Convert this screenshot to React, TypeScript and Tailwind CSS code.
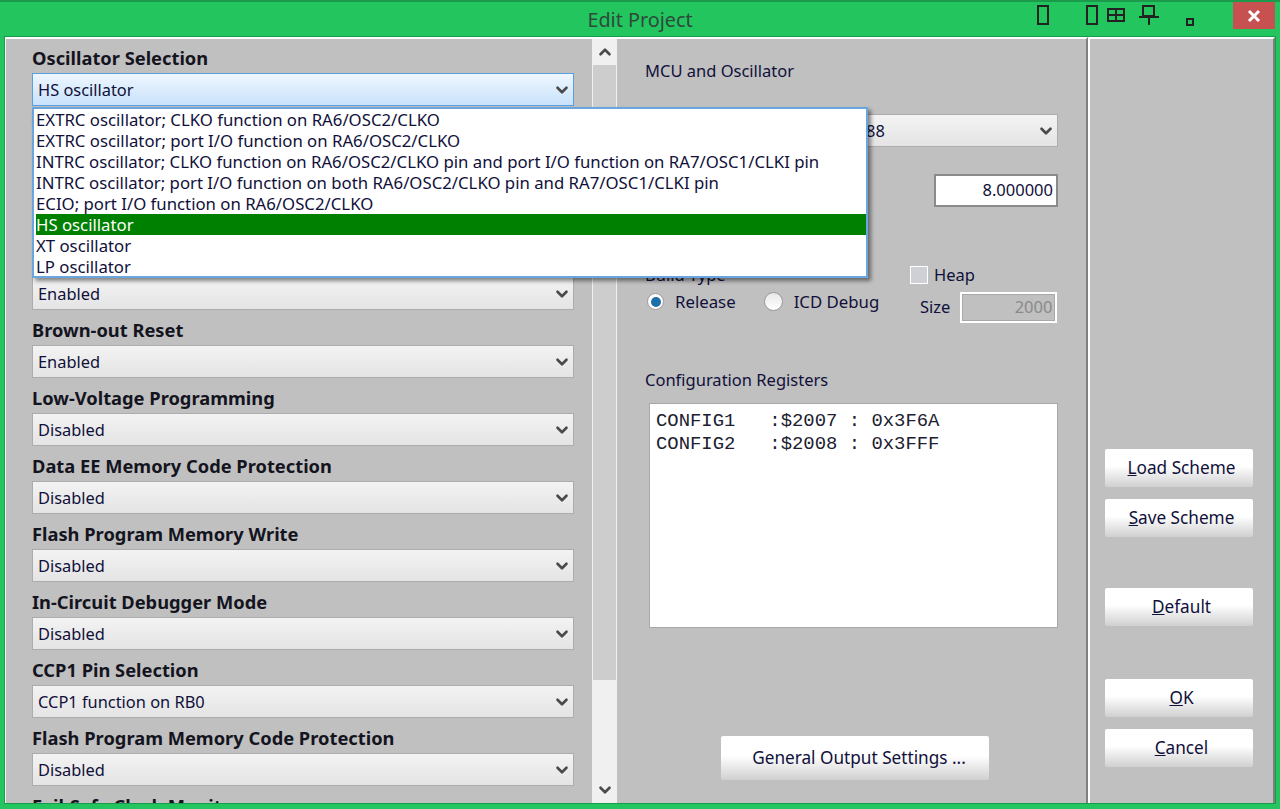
import React from "react";
import { ChevronDown, ChevronUp } from "lucide-react";

const font = "font-['Noto_Sans','Open_Sans',sans-serif]";

const rows: [string, string][] = [
  ["Oscillator Selection", "HS oscillator"],
  ["Watchdog Timer", "Disabled"],
  ["Power-up Timer", "Enabled"],
  ["RA5/MCLR/VPP Pin Function", "Enabled"],
  ["Brown-out Reset", "Enabled"],
  ["Low-Voltage Programming", "Disabled"],
  ["Data EE Memory Code Protection", "Disabled"],
  ["Flash Program Memory Write", "Disabled"],
  ["In-Circuit Debugger Mode", "Disabled"],
  ["CCP1 Pin Selection", "CCP1 function on RB0"],
  ["Flash Program Memory Code Protection", "Disabled"],
  ["Fail-Safe Clock Monitor", "Enabled"],
];

const options = [
  "EXTRC oscillator; CLKO function on RA6/OSC2/CLKO",
  "EXTRC oscillator; port I/O function on RA6/OSC2/CLKO",
  "INTRC oscillator; CLKO function on RA6/OSC2/CLKO pin and port I/O function on RA7/OSC1/CLKI pin",
  "INTRC oscillator; port I/O function on both RA6/OSC2/CLKO pin and RA7/OSC1/CLKI pin",
  "ECIO; port I/O function on RA6/OSC2/CLKO",
  "HS oscillator",
  "XT oscillator",
  "LP oscillator",
];

function Combo({ value, focused, className = "" }: { value: string; focused?: boolean; className?: string }) {
  return (
    <div
      className={
        "flex h-[33px] items-center justify-between border pl-[5px] pr-[2px] text-[16.4px] text-[#10103a] " +
        (focused
          ? "border-[#5a9fe0] bg-gradient-to-b from-[#eef6fe] to-[#c9e2fb] "
          : "border-[#acacac] bg-gradient-to-b from-[#f3f3f3] to-[#e4e4e4] ") +
        className
      }
    >
      <span className="whitespace-nowrap pt-[2px]">{value}</span>
      <ChevronDown size={18} strokeWidth={3.5} color="#4a4a4a" />
    </div>
  );
}

function Btn({ children, className = "" }: { children: React.ReactNode; className?: string }) {
  return (
    <div
      className={
        "flex items-center justify-center rounded-[2px] bg-gradient-to-b from-white from-45% to-[#d0d0d0] text-[17.2px] text-[#10103a] " +
        className
      }
    >
      {children}
    </div>
  );
}

export default function App() {
  return (
    <div className={"flex h-[809px] w-[1280px] flex-col overflow-hidden border-t-2 border-[#1b9a4c] bg-[#22c55e] px-[5px] pb-[6px] " + font}>
      <div className="relative flex h-[35px] shrink-0 items-center justify-center pt-[1px] text-[19.8px] text-[#2f4a3c]">
        Edit Project
        <div className="absolute right-[-5px] top-[-2px] h-[37px] w-[1280px]">
          <svg className="absolute left-0 top-0" width="1280" height="37" fill="none" stroke="#222" strokeWidth="2">
            <rect x="1038" y="6" width="10" height="18" />
            <rect x="1087" y="6" width="10" height="18" />
            <path d="M1108 9h16v12h-16zM1116 9v12M1108 15h16" />
            <path d="M1143 6h11v10h-11zM1139 17h20" />
            <path d="M1149 17v8" />
            <rect x="1187" y="19" width="6" height="6" />
          </svg>
          <div className="absolute left-[1233px] top-[2px] flex h-[27px] w-[42px] items-center justify-center bg-[#c75050]">
            <svg width="14" height="14" fill="none" stroke="#fff" strokeWidth="3">
              <path d="M2 2l10 10M12 2L2 12" />
            </svg>
          </div>
        </div>
      </div>

      <div className="relative flex min-h-0 flex-1 bg-[#c0c0c0] ring-1 ring-[#1b9a4c]">
        {/* left page */}
        <div className="flex w-[1083px] shrink-0 border-l border-r-2 border-t-2 border-white border-r-[#808080]">
          <div className="w-[586px] shrink-0 overflow-hidden pl-[26px] pr-[18px] pt-[5px]">
            {rows.map(([label, value], i) => (
              <div key={label} className="mb-[3px] h-[65px]">
                <div className="flex h-[28px] items-center whitespace-nowrap text-[18.3px] font-bold text-[#14141f]">{label}</div>
                <Combo value={value} focused={i === 0} className="mt-[1px]" />
              </div>
            ))}
          </div>

          <div className="flex w-[25px] shrink-0 flex-col bg-[#f0f0f0]">
            <div className="flex h-[26px] items-center justify-center">
              <ChevronUp size={18} strokeWidth={3.5} color="#4a4a4a" />
            </div>
            <div className="mx-[1px] h-[615px] bg-[#cdcdcd]" />
            <div className="flex-1" />
            <div className="flex h-[26px] items-center justify-center">
              <ChevronDown size={18} strokeWidth={3.5} color="#4a4a4a" />
            </div>
          </div>

          <div className="flex min-w-0 flex-1 flex-col pl-[28px] pr-[28px]">
            <div className="mt-[20px] text-[16.5px] leading-[24px] text-[#10103a]">MCU and Oscillator</div>
            <div className="mt-[31px] flex items-center justify-between text-[16.5px] text-[#10103a]">
              <span>MCU</span>
              <Combo value="PIC16F88" className="w-[251px]" />
            </div>
            <div className="mt-[27px] flex justify-end">
              <div className="flex h-[33px] w-[124px] items-center justify-end border-2 border-[#8a8a8a] bg-white pr-[3px] text-[16.5px] text-[#10103a]">
                8.000000
              </div>
            </div>
            <div className="mt-[56px] flex">
              <div className="w-[265px]">
                <div className="h-[24px] text-[16.5px] leading-[24px] text-[#10103a]">Build Type</div>
                <div className="mt-[2px] flex items-center text-[16.8px] text-[#10103a]">
                  <span className="ml-[2px] flex h-[17px] w-[17px] items-center justify-center rounded-full border border-[#9a9a9a] bg-white">
                    <span className="h-[10px] w-[10px] rounded-full bg-[#1d6fa8]" />
                  </span>
                  <span className="ml-[11px]">Release</span>
                  <span className="ml-[28px] h-[19px] w-[19px] rounded-full border border-[#9a9a9a] bg-gradient-to-b from-[#e8e8e8] to-white" />
                  <span className="ml-[11px]">ICD Debug</span>
                </div>
              </div>
              <div className="flex-1">
                <div className="flex items-center text-[16.5px] text-[#10103a]">
                  <span className="h-[18px] w-[18px] border border-white bg-[#cfcfd6]" />
                  <span className="ml-[6px]">Heap</span>
                </div>
                <div className="mt-[4px] flex items-center text-[16.5px] text-[#10103a]">
                  <span className="ml-[10px]">Size</span>
                  <span className="ml-[10px] flex h-[31px] w-[97px] items-center justify-end border-2 border-white bg-[#c0c0c0] pr-[3px] text-[#8a8a8a] outline outline-[#a8a8a8] -outline-offset-3">
                    2000
                  </span>
                </div>
              </div>
            </div>
            <div className="mt-[45px] text-[16.5px] leading-[24px] text-[#10103a]">Configuration Registers</div>
            <div className="ml-[4px] mt-[11px] h-[225px] whitespace-pre border border-[#a8a8a8] bg-white pl-[6px] pt-[6px] font-['Liberation_Mono',monospace] text-[18.9px] leading-[23px] text-[#202030]">
              {"CONFIG1   :$2007 : 0x3F6A\nCONFIG2   :$2008 : 0x3FFF"}
            </div>
            <Btn className="ml-[76px] mt-[108px] h-[44px] w-[268px] pl-[8px]">General Output Settings ...</Btn>
          </div>
        </div>

        {/* right page */}
        <div className="flex flex-1 flex-col items-center border-l-2 border-r-2 border-t-2 border-l-white border-r-[#808080] border-t-white pr-[6px]">
          <Btn className="mt-[410px] h-[38px] w-[148px] pl-[6px]"><span><u>L</u>oad Scheme</span></Btn>
          <Btn className="mt-[12px] h-[38px] w-[148px] pl-[6px]"><span><u>S</u>ave Scheme</span></Btn>
          <Btn className="mt-[51px] h-[38px] w-[148px] pl-[6px]"><span><u>D</u>efault</span></Btn>
          <Btn className="mt-[53px] h-[38px] w-[148px] pl-[6px]"><span><u>O</u>K</span></Btn>
          <Btn className="mt-[12px] h-[38px] w-[148px] pl-[6px]"><span><u>C</u>ancel</span></Btn>
        </div>

        {/* dropdown list */}
        <div className="absolute left-[27px] top-[70px] h-[171px] w-[836px] border-2 border-[#6aa5e0] bg-white pl-[2px] text-[16.75px] text-[#10103a] shadow-[3px_3px_4px_rgba(0,0,0,0.45)]">
          {options.map((o) => (
            <div key={o} className={"h-[21px] whitespace-nowrap leading-[21px] " + (o === "HS oscillator" ? "bg-[#008000] text-white" : "")}>
              {o}
            </div>
          ))}
        </div>
      </div>
    </div>
  );
}
